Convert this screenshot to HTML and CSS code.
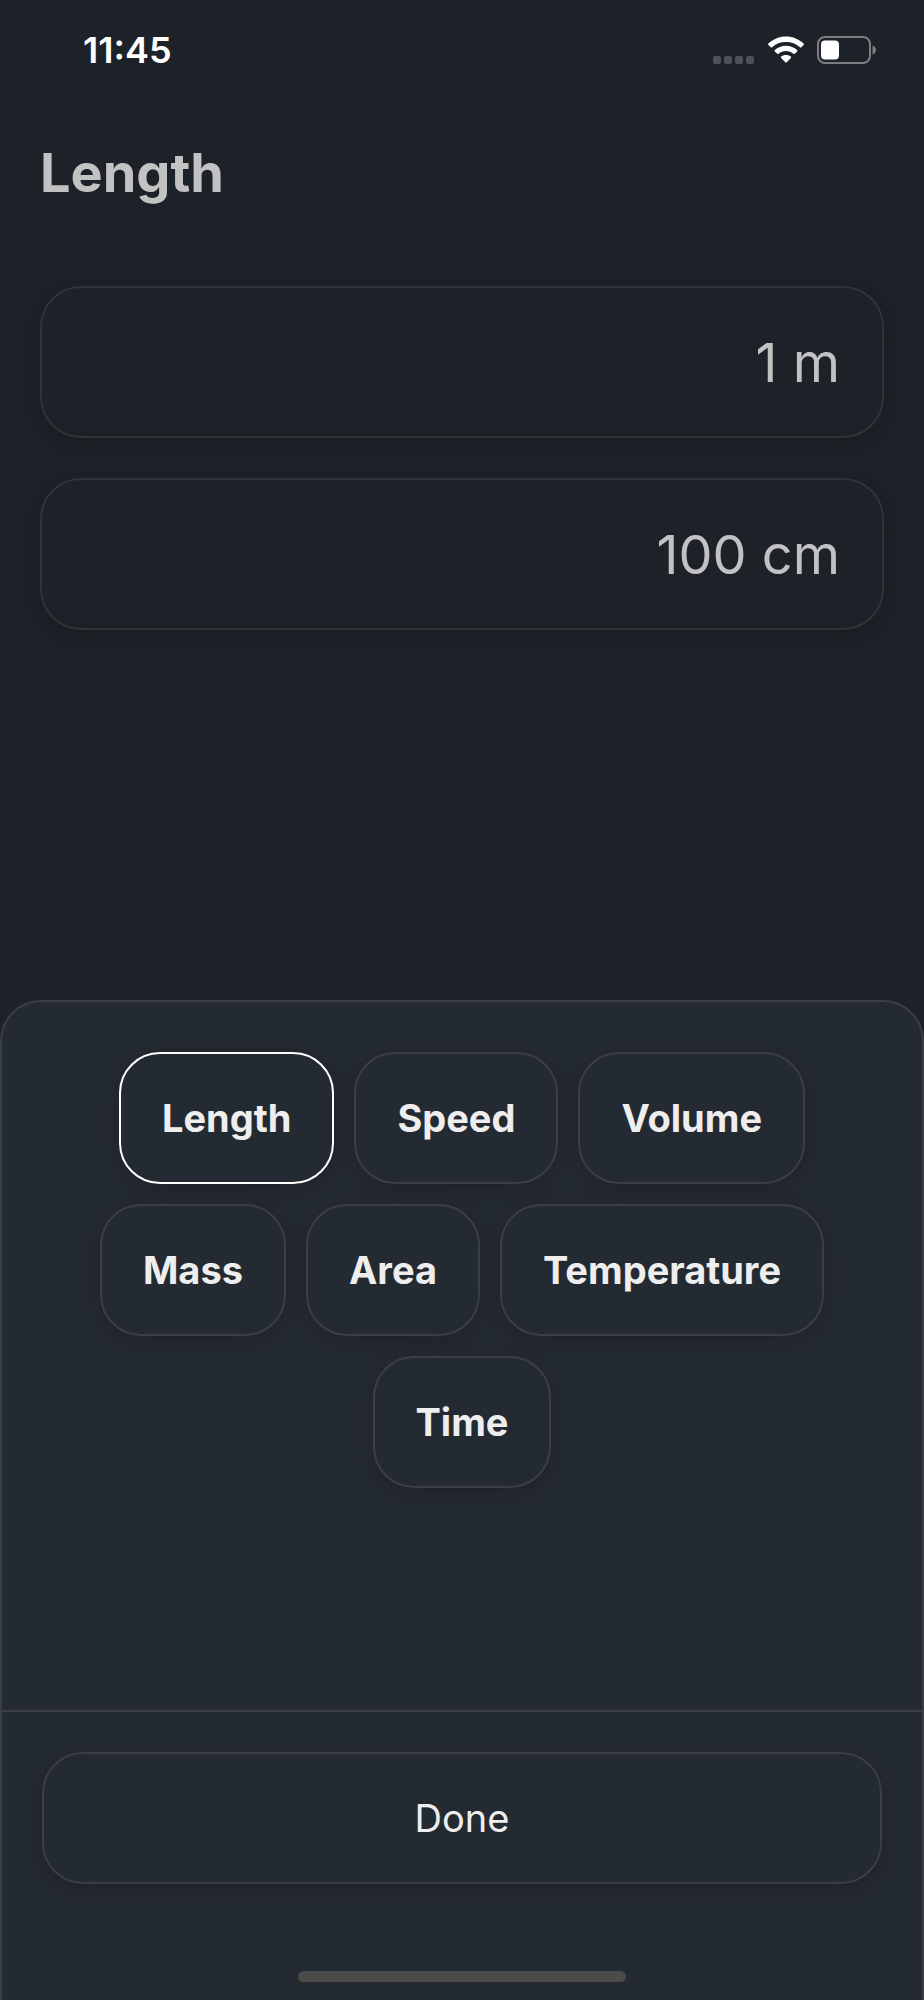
FILE: index.html
```html
<!DOCTYPE html>
<html lang="en">
<head>
<meta charset="utf-8">
<meta name="viewport" content="width=device-width, initial-scale=1">
<title>Length</title>
<link rel="stylesheet" href="styles.css">
</head>
<body>
<div class="app">
  <header class="status">
    <time class="clock">11:45</time>
    <div class="indicators">
      <svg class="signal" width="42" height="8" viewBox="0 0 42 8" aria-hidden="true">
        <rect x="0" width="8" height="8" rx="2"/><rect x="11" width="8" height="8" rx="2"/><rect x="22" width="8" height="8" rx="2"/><rect x="33" width="8" height="8" rx="2"/>
      </svg>
      <svg class="wifi" width="36" height="28" viewBox="0 0 36 28" aria-hidden="true">
        <path d="M18 0.5C24.9 0.5 31.1 3.2 35.6 7.6Q36.2 8.3 35.6 9L33.3 11.2Q32.6 11.8 31.9 11.2C28.3 7.7 23.4 5.9 18 5.9S7.700 7.700 4.100 11.200Q3.400 11.800 2.700 11.200L0.400 9Q-0.200 8.300 0.400 7.600C4.900 3.200 11.100 0.500 18 0.500Z"/>
        <path d="M18 9.700C22.400 9.700 26.300 11.300 29.200 14Q29.800 14.700 29.200 15.400L26.700 17.800Q26 18.400 25.300 17.800C23.400 16 20.800 15.100 18 15.100S12.600 16 10.700 17.800Q10 18.400 9.300 17.800L6.800 15.400Q6.200 14.700 6.800 14C9.700 11.300 13.600 9.700 18 9.700Z"/>
        <path d="M18 18.900C19.900 18.900 21.700 19.500 22.900 20.600Q23.500 21.200 22.900 21.900L18.700 26.200Q18 26.900 17.300 26.200L13.100 21.900Q12.500 21.200 13.100 20.600C14.300 19.500 16.100 18.900 18 18.900Z"/>
      </svg>
      <svg class="battery" width="59" height="28" viewBox="0 0 59 28" aria-hidden="true">
        <rect class="battery-shell" x="1" y="1" width="52" height="26" rx="7"/>
        <rect class="battery-level" x="4" y="4.500" width="18" height="19" rx="4"/>
        <path class="battery-cap" d="M55.500 9.500C57.700 10.400 59 12 59 14S57.700 17.600 55.500 18.500Z"/>
      </svg>
    </div>
  </header>

  <main class="converter">
    <h1 class="title">Length</h1>
    <input class="field" type="text" value="1 m" aria-label="From">
    <input class="field" type="text" value="100 cm" aria-label="To">
  </main>

  <section class="sheet" aria-label="Category">
    <div class="chips">
      <button class="chip chip-selected" type="button" aria-pressed="true">Length</button>
      <button class="chip" type="button">Speed</button>
      <button class="chip" type="button">Volume</button>
      <button class="chip" type="button">Mass</button>
      <button class="chip" type="button">Area</button>
      <button class="chip" type="button">Temperature</button>
      <button class="chip" type="button">Time</button>
    </div>
    <footer class="actions">
      <button class="done" type="button">Done</button>
      <div class="home-bar"></div>
    </footer>
  </section>
</div>
</body>
</html>
```
FILE: styles.css
```css
* {
  box-sizing: border-box;
}

body {
  margin: 0;
  background: #1d2128;
  color: #eeeeef;
  font-family: Inter, "Liberation Sans", sans-serif;
}

.app {
  display: flex;
  flex-direction: column;
  min-height: 100vh;
}

.status {
  display: flex;
  align-items: center;
  justify-content: space-between;
  padding: 27px 48px 0 83px;
  color: #fff;
}

.clock {
  font-size: 36px;
  line-height: 46px;
  font-weight: 600;
}

.indicators {
  display: flex;
  align-items: flex-end;
  gap: 13px;
}

.signal {
  fill: #4e5157;
}

.wifi,
.battery-level {
  fill: #fff;
}

.battery-shell {
  fill: none;
  stroke: #7b7d81;
  stroke-width: 2;
}

.battery-cap {
  fill: #7b7d81;
}

.converter {
  display: flex;
  flex-direction: column;
  flex: 1;
  gap: 40px;
  padding: 67px 40px 40px;
}

.title {
  margin: 0 0 40px;
  color: #c2c2c2;
  font-size: 54px;
  line-height: 66px;
  font-weight: 700;
}

.field {
  width: 100%;
  height: 152px;
  padding: 0 42px;
  border: 2px solid #303338;
  border-radius: 41px;
  background: #1d2128;
  box-shadow: 0 5px 14px rgba(26, 26, 28, 0.5);
  color: #c2c2c2;
  font: inherit;
  font-size: 54px;
  text-align: right;
}

.sheet {
  display: flex;
  flex-direction: column;
  min-height: 1000px;
  border: 2px solid #3b3e46;
  border-bottom: 0;
  border-radius: 41px 41px 0 0;
  background: #242a31;
}

.chips {
  display: flex;
  flex: 1;
  flex-wrap: wrap;
  align-content: flex-start;
  justify-content: center;
  gap: 20px;
  padding: 50px 40px;
}

.chip,
.done {
  height: 132px;
  padding: 0 41px;
  border: 2px solid #3b3e46;
  border-radius: 41px;
  background: #242a31;
  box-shadow: 0 5px 16px rgba(30, 26, 38, 0.5);
  color: #eeeeef;
  font: inherit;
  font-size: 38px;
}

.chip {
  font-weight: 700;
}

.chip-selected {
  border-color: #fff;
}

.actions {
  display: flex;
  flex-direction: column;
  align-items: center;
  padding: 40px 40px 18px;
  border-top: 2px solid #3b3e46;
}

.done {
  width: 100%;
}

.home-bar {
  width: 39%;
  height: 11px;
  margin-top: 87px;
  border-radius: 6px;
  background: #4b4b4a;
}
```
